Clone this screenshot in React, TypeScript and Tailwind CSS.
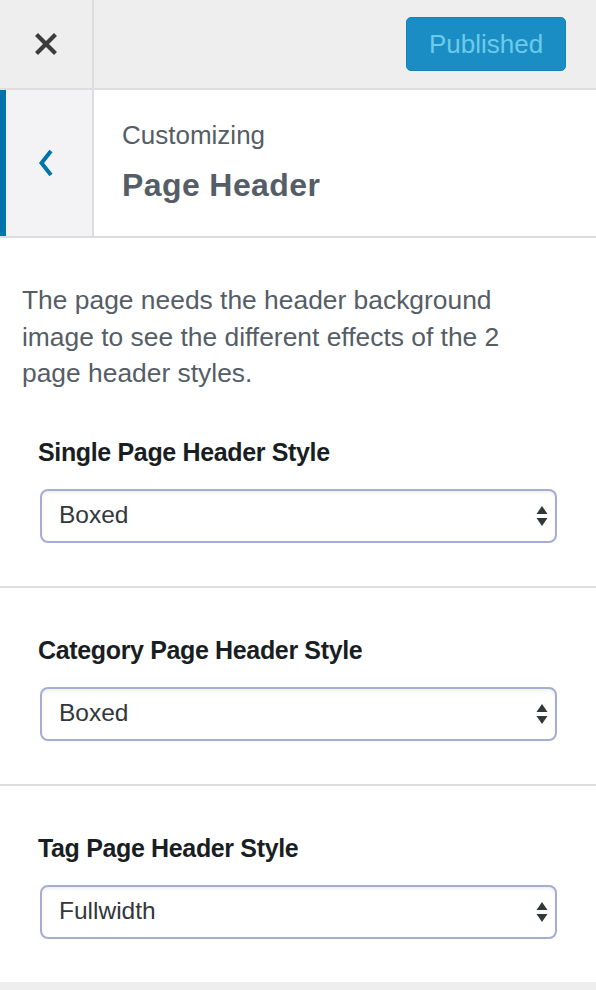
import React from "react";

const font = { fontFamily: '"Liberation Sans", Arial, sans-serif' };

function Arrows() {
  return (
    <svg width="12" height="22" viewBox="0 0 12 22" className="shrink-0">
      <path d="M6 1 L11.5 9 L0.5 9 Z" fill="#32373c" />
      <path d="M6 21 L11.5 13 L0.5 13 Z" fill="#32373c" />
    </svg>
  );
}

function SelectBox({ value }: { value: string }) {
  return (
    <div className="ml-[40px] mr-[39px] h-[54px] rounded-[8px] border-2 border-[#a4aed2] bg-white shadow-[inset_0_2px_3px_rgba(0,0,0,0.06)] flex items-center justify-between pl-[17px] pr-[7px]">
      <span className="text-[24.5px] text-[#32373c] leading-none">{value}</span>
      <Arrows />
    </div>
  );
}

function Section({ label, value, first }: { label: string; value: string; first?: boolean }) {
  return (
    <div className={first ? "pt-[46px] pb-[43px]" : "border-t-2 border-[#dedede] pt-[48px] pb-[43px]"}>
      <div className="pl-[38px] h-[30px] flex items-center text-[25px] font-bold tracking-[-0.35px] text-[#191e23] mb-[21px]">
        {label}
      </div>
      <SelectBox value={value} />
    </div>
  );
}

export default function App() {
  return (
    <div className="w-[596px] h-[990px] bg-white overflow-hidden flex flex-col" style={font}>
      {/* Top bar */}
      <div className="h-[90px] shrink-0 bg-[#eeeeee] border-b-2 border-[#dddddd] flex">
        <div className="w-[94px] border-r-2 border-[#dddddd] flex items-center justify-center">
          <svg width="22" height="22" viewBox="0 0 22 22">
            <path d="M3 3 L19 19 M19 3 L3 19" stroke="#3c3c3c" strokeWidth="4.2" strokeLinecap="square" />
          </svg>
        </div>
        <div className="flex-1 flex items-center justify-end pr-[30px]">
          <div className="w-[160px] h-[54px] rounded-[5px] bg-[#1a8ec4] border border-[#1582b8] flex items-center justify-center text-[26px] text-[#6ccbe8]">
            Published
          </div>
        </div>
      </div>

      {/* Section header */}
      <div className="h-[148px] shrink-0 border-b-2 border-[#dddddd] flex">
        <div className="w-[94px] bg-[#f3f3f5] border-l-[6px] border-[#0073aa] border-r-2 border-r-[#dddddd] flex items-center justify-center pr-[6px]">
          <svg width="16" height="28" viewBox="0 0 16 28">
            <path d="M13 2 L3.5 14 L13 26" stroke="#0073aa" strokeWidth="4" fill="none" strokeLinejoin="miter" />
          </svg>
        </div>
        <div className="flex-1 pl-[28px] flex flex-col justify-center">
          <div className="text-[26px] text-[#555d66] leading-[30px] mt-[-4px]">Customizing</div>
          <div className="text-[32px] font-bold tracking-[0.4px] text-[#555d66] leading-[34px] mt-[18px]">Page Header</div>
        </div>
      </div>

      {/* Content */}
      <div className="flex-1 flex flex-col">
        <p className="pt-[44px] pl-[22px] pr-[60px] text-[26.4px] leading-[36.5px] text-[#555d66]">
          The page needs the header background image to see the different effects of the 2 page header styles.
        </p>
        <Section first label="Single Page Header Style" value="Boxed" />
        <Section label="Category Page Header Style" value="Boxed" />
        <Section label="Tag Page Header Style" value="Fullwidth" />
        <div className="flex-1 bg-[#eeeeee]" />
      </div>
    </div>
  );
}
